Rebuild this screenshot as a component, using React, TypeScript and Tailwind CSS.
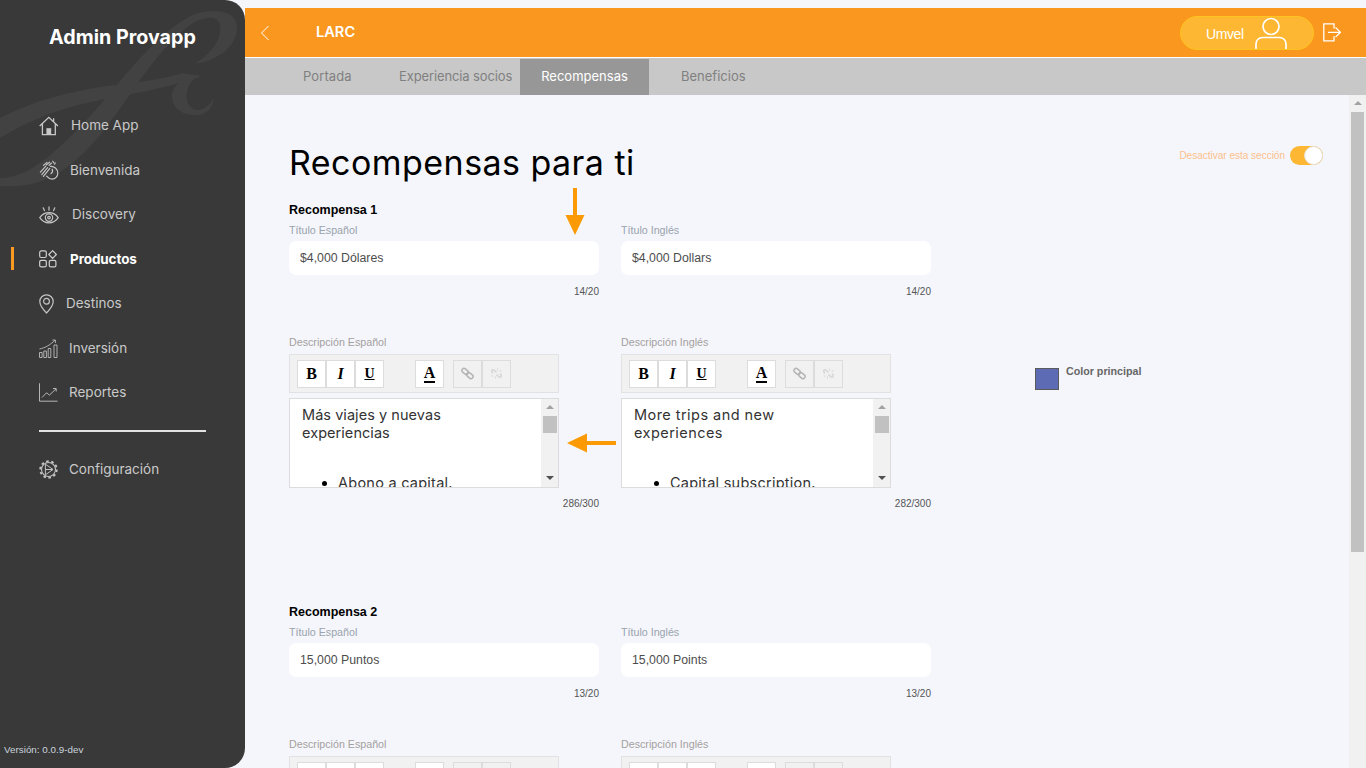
import { ReactNode } from "react";

const montserrat = { fontFamily: '"Inter", "Open Sans", sans-serif' };

function HomeIcon() {
  return (
    <svg width="20" height="20" viewBox="0 0 20 20" fill="none" stroke="#c8c8c8" strokeWidth="1.3">
      <path d="M.7 10 9.8 1.4l9.1 8.6M3.4 8v10.6h12.9V8M14.6 2.2v4" />
      <rect x="7.4" y="12.2" width="4.8" height="6.4" fill="#c8c8c8" stroke="none" />
    </svg>
  );
}

function ClapIcon() {
  return (
    <svg width="20" height="20" viewBox="0 0 20 20" fill="none" stroke="#c4c4c4" strokeWidth="1.2" strokeLinecap="round">
      <path d="M1.4 12.2 6.6 6.4M2.8 14.6 8.6 7.6M4.4 16.4 10.8 8.4M4.4 5.4 8 2.4M7.2 5l3.4-2.8M10 5.4l2.4-2.2" />
      <path d="M11.4 6.4c3.6-.4 7.4 2.4 7.4 6.8 0 3.4-2.600 5.900-5.600 5.900-2.400 0-4-1-5.600-3" />
      <path d="M13.2 9.2c.8 1.600.2 3.200-1.200 4.400M13.800 1.200l.8 1.600M16.200 2.800l-.6 1.400" />
    </svg>
  );
}

function EyeIcon() {
  return (
    <svg width="20" height="18" viewBox="0 0 20 18" fill="none" stroke="#c4c4c4" strokeWidth="1.2" strokeLinecap="round">
      <path d="M.8 11.6C3 8.2 6.2 6.6 10 6.6s7 1.600 9.200 5c-2.200 3.400-5.400 5.200-9.200 5.200S3 15 .8 11.600Z" />
      <circle cx="10" cy="11.6" r="3.7" />
      <circle cx="10" cy="11.6" r="1.3" />
      <path d="M10 .8v3.400M4.200 1.800l1.200 2.800M15.800 1.800l-1.200 2.800" />
    </svg>
  );
}

function ProductsIcon() {
  return (
    <svg width="18" height="18" viewBox="0 0 18 18" fill="none" stroke="#d0d0d0" strokeWidth="1.2">
      <rect x=".7" y=".9" width="6.6" height="6.6" rx="1.5" />
      <rect x=".7" y="10.3" width="6.6" height="6.6" rx="1.5" />
      <rect x="10.3" y="10.3" width="6.6" height="6.6" rx="1.5" />
      <path d="m13.6.7 3.800 3.800-3.800 3.800-3.800-3.800z" />
    </svg>
  );
}

function PinIcon() {
  return (
    <svg width="15" height="20" viewBox="0 0 15 20" fill="none" stroke="#c4c4c4" strokeWidth="1.2">
      <path d="M7.5 19C4 15.400.8 11.500.8 7.500a6.700 6.700 0 0 1 13.400 0c0 4-3.200 7.900-6.700 11.500Z" />
      <circle cx="7.5" cy="7.3" r="2.9" />
    </svg>
  );
}

function BarsIcon() {
  return (
    <svg width="19" height="19" viewBox="0 0 19 19" fill="none" stroke="#bdbdbd" strokeWidth=".9">
      <path d="M.5 13.500h2.600v5H.5zM4.800 12h2.600v6.500H4.800zM9.200 9.500h2.600v9H9.200zM15 6h3v12.500h-3z" />
      <path d="M.5 10C6 8.800 11 6.200 16 1.200M13.400 1h3v3" />
    </svg>
  );
}

function ChartIcon() {
  return (
    <svg width="19" height="19" viewBox="0 0 19 19" fill="none" stroke="#c4c4c4" strokeWidth=".9">
      <path d="M.5.300v17.900h18" />
      <path d="m3 14.500 4.500-4.700 3 2.300 6.500-6.300M14 5.500h3.200v3" />
    </svg>
  );
}

function GearIcon() {
  return (
    <svg width="19" height="19" viewBox="0 0 19 19" fill="none" stroke="#c4c4c4">
      <circle cx="9.5" cy="9.5" r="7" strokeWidth="1.1" />
      <circle cx="9.5" cy="9.5" r="8.3" strokeWidth="1.8" strokeDasharray="2.6 2.61" />
      <path d="m6.400 4.200 7.600 5.300-7.600 5.300zM6.400 9.500H14" strokeWidth="1" />
    </svg>
  );
}

const navItems: { label: string; icon: ReactNode; gap: string; h: string; active?: boolean }[] = [
  { label: "Home App", icon: <HomeIcon />, gap: "ml-[12px]", h: "h-[45px]" },
  { label: "Bienvenida", icon: <ClapIcon />, gap: "ml-[11px]", h: "h-[44px]" },
  { label: "Discovery", icon: <EyeIcon />, gap: "ml-[13px]", h: "h-[45px]" },
  { label: "Productos", icon: <ProductsIcon />, gap: "ml-[11px]", h: "h-[44px]", active: true },
  { label: "Destinos", icon: <PinIcon />, gap: "ml-[7px]", h: "h-[45px]" },
  { label: "Inversión", icon: <BarsIcon />, gap: "ml-[10px]", h: "h-[44px]" },
  { label: "Reportes", icon: <ChartIcon />, gap: "ml-[10px]", h: "h-[45px]" },
];

function NavRow({ label, icon, gap, h, active }: (typeof navItems)[number]) {
  return (
    <div className={`relative flex items-center pl-[39px] ${h}`}>
      {active && <div className="absolute left-[11px] top-[10px] h-[23px] w-[3px] bg-[#fa9a22]" />}
      <div className="flex w-[20px] shrink-0 items-center">{icon}</div>
      <span
        style={montserrat}
        className={`${gap} text-[13.5px] ${active ? "font-bold tracking-[-0.1px] text-white" : "text-[#c9c9c9]"}`}
      >
        {label}
      </span>
    </div>
  );
}

function Sidebar() {
  return (
    <aside className="relative z-10 flex h-[768px] w-[245px] shrink-0 flex-col overflow-hidden rounded-r-[20px] bg-[#393939]">
      <svg className="absolute left-0 top-0" width="245" height="190" viewBox="0 0 245 190" fill="#424242">
        <path d="M0 118C35 100 70 92 100 87 140 82 170 78 182 73L200 76C170 88 130 94 100 100 60 108 30 120 0 138Z" />
        <path d="M0 178C30 178 60 150 100 105 130 70 160 30 195 14 215 8 237 10 237 28 237 45 220 60 195 64 212 52 222 40 220 25 218 15 205 16 190 25 170 40 150 65 133 90 105 130 70 185 15 186L0 186Z" />
        <path d="M198 75C182 78 171 86 172 98 173 110 185 116 198 115 207 114 213 108 214 98 209 106 202 111 196 110 188 108 184 98 188 88 190 82 194 78 200 77Z" />
      </svg>
      <h1 style={montserrat} className="relative mt-[24px] h-[26px] text-center text-[19.7px] leading-[26px] font-bold text-white">
        Admin Provapp
      </h1>
      <nav className="relative mt-[53px]">
        {navItems.map((item) => (
          <NavRow key={item.label} {...item} />
        ))}
        <div className="mx-[39px] mt-[15px] h-[2px] w-[167px] bg-[#e2e2e2]" />
        <div className="mt-[15px] flex h-[44px] items-center pl-[39px]">
          <GearIcon />
          <span style={montserrat} className="ml-[11px] text-[13.5px] text-[#c9c9c9]">
            Configuración
          </span>
        </div>
      </nav>
      <div className="relative mt-auto mb-[11px] pl-[4px] font-['Liberation_Sans',sans-serif] text-[9.85px] leading-[14px] text-[#c9d3dc]">
        Versión: 0.0.9-dev
      </div>
    </aside>
  );
}

function TopBar() {
  return (
    <>
      <header className="mt-[8px] flex h-[49px] shrink-0 items-center bg-[#f9971f] pr-[25px] pl-[15px]">
        <svg width="10" height="16" viewBox="0 0 10 16" fill="none" stroke="#ffffff" strokeWidth="1">
          <path d="M8.500 1 1.500 8l7 7" />
        </svg>
        <span style={montserrat} className="ml-[46px] text-[14.6px] font-semibold text-white">
          LARC
        </span>
        <div className="ml-auto flex h-[34px] w-[134px] items-center rounded-full border border-[#ffc41f] bg-[#fdb733] pl-[25px]">
          <span className="translate-y-[2px] font-['Liberation_Sans',sans-serif] text-[14px] tracking-[-0.4px] text-white">Umvel</span>
          <svg className="ml-[10px]" width="34" height="32" viewBox="0 0 34 32" fill="none" stroke="#ffffff" strokeWidth="1.7">
            <circle cx="17" cy="9.5" r="8" />
            <path d="M2 32v-5c0-4 3-6.500 6.500-6.500h17c3.500 0 6.500 2.500 6.500 6.500v5" />
          </svg>
        </div>
        <svg className="ml-[9px]" width="18" height="19" viewBox="0 0 18 19" fill="none" stroke="#ffffff" strokeWidth="1.3">
          <path d="M11 5.500V.8H.8v17H11v-4.500M5 9.300h12M12.500 4.500l5 4.800-5 4.800" />
        </svg>
      </header>
      <div className="h-[1px] shrink-0 bg-white" />
      <nav style={montserrat} className="flex h-[37px] shrink-0 items-end bg-[#c8c8c8] text-[13px] text-[#808080]">
        <div className="ml-[58px] flex h-[37px] w-[96px] items-center tracking-[0.1px]">Portada</div>
        <div className="flex h-[37px] w-[121px] items-center tracking-[-0.12px] whitespace-nowrap">Experiencia socios</div>
        <div className="flex h-[36px] w-[129px] items-center justify-center bg-[#979797] text-white">Recompensas</div>
        <div className="ml-[32px] flex h-[37px] items-center">Beneficios</div>
      </nav>
    </>
  );
}

function ToolButton({ children, disabled }: { children: ReactNode; disabled?: boolean }) {
  return (
    <div
      className={`flex h-[28px] w-[29px] items-center justify-center border border-[#dcdcdc] ${disabled ? "bg-[#f1f1f1]" : "bg-white"}`}
    >
      {children}
    </div>
  );
}

function LinkGlyph({ broken }: { broken?: boolean }) {
  return (
    <svg width="13" height="13" viewBox="0 0 13 13" fill="none" stroke={broken ? "#d6d6d6" : "#b4b4b4"} strokeWidth="1.5">
      {broken ? (
        <>
          <path d="M6.500 5.500l-2-2C3.500 2.500 2 2.500 1.700 3.800c-.2 1 .3 1.700 1.300 2.500M6.500 7.500l2 2c1 1 2.500 1 2.800-.3.200-1-.3-1.700-1.300-2.500" />
          <path d="M7.500 1.500v2M11.500 4h-2M1.500 9h2M5.500 11.500v-2" strokeWidth="1" />
        </>
      ) : (
        <>
          <rect x=".6" y="2.3" width="7" height="4.2" rx="2.1" transform="rotate(40 4.1 4.4)" />
          <rect x="5.4" y="6.5" width="7" height="4.2" rx="2.1" transform="rotate(40 8.9 8.6)" />
        </>
      )}
    </svg>
  );
}

function Toolbar() {
  return (
    <div className="flex h-[39px] w-[270px] items-center border border-[#e2e2e2] bg-[#f1f1f1] pl-[7px]">
      <div className="flex font-['Liberation_Serif',serif] text-[16px] text-black">
        <ToolButton><b>B</b></ToolButton>
        <ToolButton><i className="font-bold">I</i></ToolButton>
        <ToolButton><span className="text-[14px] font-bold underline">U</span></ToolButton>
        <div className="ml-[31px]">
          <ToolButton>
            <span className="border-b-2 border-black text-[16px] leading-[16px] font-bold">A</span>
          </ToolButton>
        </div>
        <div className="ml-[9px] flex">
          <ToolButton disabled><LinkGlyph /></ToolButton>
          <ToolButton disabled><LinkGlyph broken /></ToolButton>
        </div>
      </div>
    </div>
  );
}

function Editor({ intro, introSpacing, bullet }: { intro: string[]; introSpacing: string; bullet: string }) {
  return (
    <div className="mt-[5px] flex h-[90px] w-[270px] overflow-hidden border border-[#dcdcdc] bg-white">
      <div style={montserrat} className="min-w-0 flex-1 overflow-hidden pt-[7px] pl-[12px] text-[14.5px] leading-[18px] text-[#333333]">
        {intro.map((line) => (
          <div key={line} className={`whitespace-nowrap ${introSpacing}`}>{line}</div>
        ))}
        <div className="mt-[32px] flex items-center pl-[20px]">
          <span className="mr-[11px] h-[5px] w-[5px] rounded-full bg-black" />
          <span className="tracking-[0.25px] whitespace-nowrap">{bullet}</span>
        </div>
      </div>
      <div className="flex w-[17px] shrink-0 flex-col items-center bg-[#f1f1f1] pt-[6px]">
        <div className="h-0 w-0 border-x-[4px] border-b-[4px] border-x-transparent border-b-[#a3a3a3]" />
        <div className="mt-[7px] h-[17px] w-[14px] bg-[#c1c1c1]" />
        <div className="mt-auto mb-[7px] h-0 w-0 border-x-[4px] border-t-[4px] border-x-transparent border-t-[#505050]" />
      </div>
    </div>
  );
}

function Counter({ children }: { children: ReactNode }) {
  return <div className="text-right text-[10px] leading-[12px] text-[#555555]">{children}</div>;
}

type Lang = {
  titleLabel: string;
  title: string;
  count: string;
  descLabel: string;
  intro: string[];
  introSpacing: string;
  bullet: string;
  descCount: string;
};

function LangColumn({ lang }: { lang: Lang }) {
  return (
    <div className="w-[310px]">
      <div className="text-[10.7px] leading-[14px] text-[#9aa3ad]">{lang.titleLabel}</div>
      <div className="mt-[4px] flex h-[34px] items-center rounded-[7px] bg-white pl-[11px] text-[12.3px] text-[#4d4d4d]">
        {lang.title}
      </div>
      <div className="mt-[11px]"><Counter>{lang.count}</Counter></div>
      <div className="mt-[37px] text-[10.7px] leading-[14px] text-[#a59f9f]">{lang.descLabel}</div>
      <div className="mt-[5px]"><Toolbar /></div>
      <Editor intro={lang.intro} introSpacing={lang.introSpacing} bullet={lang.bullet} />
      <div className="mt-[10px]"><Counter>{lang.descCount}</Counter></div>
    </div>
  );
}

const spanish = {
  titleLabel: "Título Español",
  descLabel: "Descripción Español",
  intro: ["Más viajes y nuevas", "experiencias"],
  introSpacing: "tracking-[0.05px]",
  bullet: "Abono a capital.",
  descCount: "286/300",
};

const english = {
  titleLabel: "Título Inglés",
  descLabel: "Descripción Inglés",
  intro: ["More trips and new", "experiences"],
  introSpacing: "tracking-[0.45px]",
  bullet: "Capital subscription.",
  descCount: "282/300",
};

const rewards: { name: string; es: Lang; en: Lang }[] = [
  {
    name: "Recompensa 1",
    es: { ...spanish, title: "$4,000 Dólares", count: "14/20" },
    en: { ...english, title: "$4,000 Dollars", count: "14/20" },
  },
  {
    name: "Recompensa 2",
    es: { ...spanish, title: "15,000 Puntos", count: "13/20" },
    en: { ...english, title: "15,000 Points", count: "13/20" },
  },
];

function Content() {
  return (
    <div className="relative flex min-h-0 flex-1 overflow-hidden font-['Liberation_Sans',sans-serif]">
      <div className="relative min-w-0 flex-1 pl-[44px]">
        <div className="flex h-[107px] items-start justify-between pr-[26px]">
          <h2 style={montserrat} className="mt-[46px] text-[34px] leading-[44px] font-normal tracking-[0.45px] text-black">
            Recompensas para ti
          </h2>
          <div className="mt-[51px] flex items-center">
            <span className="mr-[5px] text-[10px] text-[#fdbf8c]">Desactivar esta sección</span>
            <div className="relative h-[19px] w-[33px] rounded-full bg-[#fdb733]">
              <div className="absolute top-0 right-0 h-[19px] w-[19px] rounded-full border border-[#e6e0d6] bg-white" />
            </div>
          </div>
        </div>
        {rewards.map((reward) => (
          <section key={reward.name} className="h-[402px] pt-[1px]">
            <h3 className="text-[12.5px] leading-[14px] font-bold text-black">{reward.name}</h3>
            <div className="mt-[6px] flex gap-[22px]">
              <LangColumn lang={reward.es} />
              <LangColumn lang={reward.en} />
            </div>
          </section>
        ))}
        {/* color picker sits off to the right of the columns */}
        <div className="absolute top-[273px] left-[790px] flex items-start">
          <div className="h-[22px] w-[24px] border border-[#5a5a5a] bg-[#5c6bb3]" />
          <span className="mt-[-3px] ml-[7px] text-[10.7px] leading-[12px] font-bold text-[#666666]">Color principal</span>
        </div>
        {/* annotation arrows drawn over the form */}
        <svg className="absolute top-[93px] left-[319px]" width="22" height="48" viewBox="0 0 22 48" fill="#fb9a05">
          <path d="M9 0h4v27h7.500L11 47 1.500 27H9z" />
        </svg>
        <svg className="absolute top-[337px] left-[321px]" width="50" height="22" viewBox="0 0 50 22" fill="#fb9a05">
          <path d="M50 9v4H21v7.500L1 11l20-9.500V9z" />
        </svg>
      </div>
      <div className="flex w-[17px] shrink-0 flex-col items-center bg-[#f1f1f1] pt-[6px]">
        <div className="h-0 w-0 border-x-[4px] border-b-[4px] border-x-transparent border-b-[#a3a3a3]" />
        <div className="mt-[7px] h-[440px] w-[13px] bg-[#c1c1c1]" />
      </div>
    </div>
  );
}

export default function App() {
  return (
    <div className="flex h-[768px] w-[1366px] overflow-hidden bg-[#f4f6fb]">
      <Sidebar />
      <main className="flex min-w-0 flex-1 flex-col">
        <TopBar />
        <Content />
      </main>
    </div>
  );
}
